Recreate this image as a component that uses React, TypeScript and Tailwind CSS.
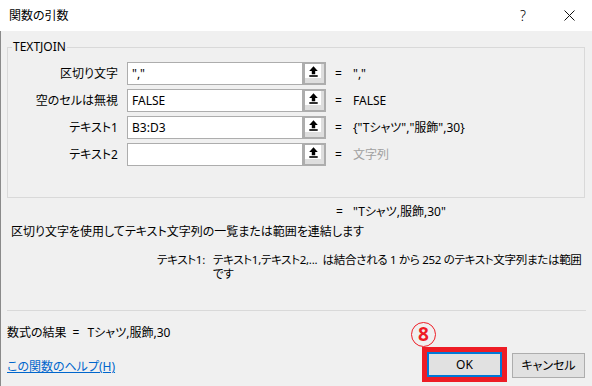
import React from "react";

const rows = [
  { label: "区切り文字", value: "\",\"", result: "\",\"", muted: false },
  { label: "空のセルは無視", value: "FALSE", result: "FALSE", muted: false },
  { label: "テキスト1", value: "B3:D3", result: "{\"Tシャツ\",\"服飾\",30}", muted: false },
  { label: "テキスト2", value: "", result: "文字列", muted: true },
];

function RefButton() {
  return (
    <div className="w-[23px] h-[23px] border-2 border-[#adadad] bg-[#dedede] flex items-start">
      <div className="w-[16px] h-[14px] bg-white flex items-center justify-center">
        <svg width="9" height="11" viewBox="0 0 9 11">
          <path d="M4.5 0.3 L8.8 5 L6.2 5 L6.2 8.2 L2.8 8.2 L2.8 5 L0.2 5 Z" fill="#000" />
          <rect x="0.3" y="9.2" width="8.4" height="1.6" fill="#000" />
        </svg>
      </div>
    </div>
  );
}

export default function App() {
  return (
    <div className="w-[592px] h-[386px] overflow-hidden bg-[#f0f0f0] text-black text-[12px] font-['Noto_Sans','Noto_Sans_CJK_JP',sans-serif] [font-feature-settings:'palt']">
      {/* タイトルバー */}
      <div className="h-[31px] bg-white flex items-center">
        <div className="pl-[9px] leading-[16px]">関数の引数</div>
        <div className="ml-auto flex">
          <div className="w-[46px] flex items-center justify-center text-[14px] font-light">?</div>
          <div className="w-[46px] flex items-center justify-center">
            <svg width="11" height="11" viewBox="0 0 11 11">
              <path d="M0.5 0.5 L10.5 10.5 M10.5 0.5 L0.5 10.5" stroke="#111" strokeWidth="1" />
            </svg>
          </div>
        </div>
      </div>

      <div className="h-[355px] border-l border-[#8a8a8a] pl-[6px] pt-[8px] flex flex-col">
        <fieldset className="w-[578px] border border-[#d9d9d9] pt-[7px] pb-[31px]">
          <legend className="ml-[4px] px-[1px] leading-[16px]">TEXTJOIN</legend>
          <div className="flex flex-col gap-[4px]">
            {rows.map((r) => (
              <div key={r.label} className="flex items-center h-[23px]">
                <div className="w-[110px] text-right leading-[16px]">{r.label}</div>
                <div className="ml-[9px] w-[176px] h-[23px] border border-[#adadad] bg-white pl-[4px] flex items-center leading-[16px]">
                  {r.value}
                </div>
                <RefButton />
                <div className="ml-[9px] w-[18px] leading-[16px]">=</div>
                <div className={r.muted ? "text-[#a0a0a0] leading-[16px]" : "leading-[16px]"}>{r.result}</div>
              </div>
            ))}
          </div>
        </fieldset>

        <div className="mt-[6px] ml-[329px] flex leading-[16px]">
          <span className="w-[17px]">=</span>
          <span>"Tシャツ,服飾,30"</span>
        </div>

        <div className="mt-[4px] ml-[4px] leading-[16px]">
          区切り文字を使用してテキスト文字列の一覧または範囲を連結します
        </div>

        <div className="mt-[13px] ml-[150px] flex leading-[14px] text-[11.5px] tracking-[-0.3px]">
          <div className="w-[56px] shrink-0 whitespace-nowrap">テキスト1:</div>
          <div className="w-[376px] shrink-0 flex flex-col">
            <span className="whitespace-pre">テキスト1,テキスト2,...  は結合される 1 から 252 のテキスト文字列または範囲</span>
            <span>です</span>
          </div>
        </div>

        <div className="mt-[29px] h-px w-[579px] bg-[#d9d9d9]" />

        <div className="flex flex-1">
          <div className="pt-[14px] flex flex-col leading-[16px]">
            <div className="flex">
              <span>数式の結果</span>
              <span className="ml-[6px] w-[15px]">=</span>
              <span>Tシャツ,服飾,30</span>
            </div>
            <a href="#" className="mt-[18px] text-[#0066cc] underline">
              この関数のヘルプ(H)
            </a>
          </div>

          <div className="ml-auto mr-[7px] mt-[36px] flex items-start">
            <div className="relative border-[5px] border-[#ee1c25]">
              <div className="absolute left-[-16px] top-[-30px] w-[25px] h-[25px] rounded-full border-[1.5px] border-[#ee1c25] flex items-center justify-center text-[#ee1c25] font-bold text-[19px] leading-none">
                8
              </div>
              <button className="w-[75px] h-[25px] border-2 border-[#0078d7] bg-[#e1e1e1] flex items-center justify-center leading-[16px]">
                OK
              </button>
            </div>
            <button className="ml-[5px] mt-[6px] w-[73px] h-[25px] border border-[#adadad] bg-[#e1e1e1] flex items-center justify-center leading-[16px]">
              キャンセル
            </button>
          </div>
        </div>
      </div>
    </div>
  );
}
